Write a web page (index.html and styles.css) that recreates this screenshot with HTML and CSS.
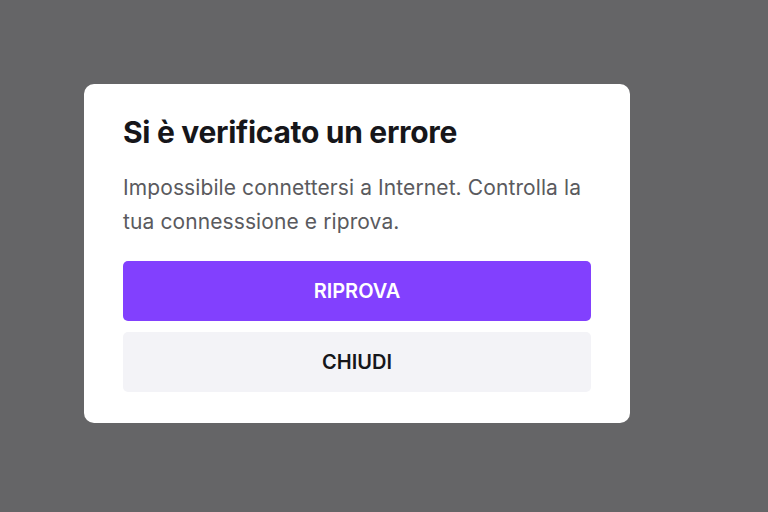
FILE: index.html
```html
<!DOCTYPE html>
<html lang="it">
<head>
  <meta charset="UTF-8">
  <meta name="viewport" content="width=device-width, initial-scale=1.0">
  <title>Errore</title>
  <link rel="stylesheet" href="styles.css">
</head>
<body>
  <div class="overlay">
    <div class="dialog">
      <h1 class="dialog-title">Si è verificato un errore</h1>
      <p class="dialog-text">Impossibile connettersi a Internet. Controlla la tua connesssione e riprova.</p>
      <div class="dialog-actions">
        <button class="btn btn-primary">RIPROVA</button>
        <button class="btn btn-secondary">CHIUDI</button>
      </div>
    </div>
  </div>
</body>
</html>
```

FILE: styles.css
```css
body, html {
  margin: 0;
  height: 100%;
}

body {
  background-color: #656567;
  font-family: Inter, "Noto Sans", sans-serif;
}

.overlay {
  padding: 84px 0 0 84px;
}

.dialog {
  width: 468px;
  padding: 30px 39px 31px 39px;
  background-color: #ffffff;
  border-radius: 10px;
}

.dialog-title {
  margin: 0;
  font-size: 30px;
  font-weight: 700;
  line-height: 36px;
  color: #16161a;
  letter-spacing: -0.3px;
}

.dialog-text {
  margin: 21px 0 0 0;
  font-size: 21px;
  line-height: 34px;
  color: #5a5a5e;
  letter-spacing: 0.1px;
}

.dialog-actions {
  margin-top: 22px;
  display: flex;
  flex-direction: column;
  gap: 11px;
}

.btn {
  height: 60px;
  border: none;
  border-radius: 5px;
  font-family: Inter, "Noto Sans", sans-serif;
  font-size: 20px;
  font-weight: 600;
  cursor: pointer;
}

.btn-primary {
  background-color: #8240fe;
  color: #ffffff;
}

.btn-secondary {
  background-color: #f3f3f7;
  color: #16161a;
}
```
